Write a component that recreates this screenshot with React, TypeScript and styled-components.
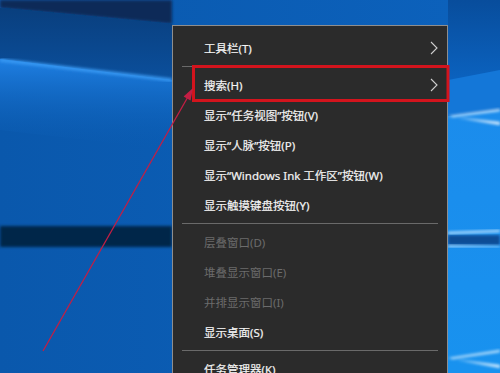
import styled, { createGlobalStyle } from 'styled-components';

const GlobalStyle = createGlobalStyle`
  html, body {
    margin: 0;
    padding: 0;
    background: #0b5cb2;
  }
`;

const Desktop = styled.div`
  position: relative;
  width: 500px;
  height: 373px;
  overflow: hidden;
  box-sizing: border-box;
  padding: 25px 0 0 172px;
  font-family: 'Noto Sans', 'Noto Sans CJK SC', sans-serif;
`;

const Wallpaper = styled.svg`
  position: absolute;
  inset: 0;
  z-index: 0;
`;

const Annotation = styled.svg`
  position: absolute;
  inset: 0;
  z-index: 2;
  pointer-events: none;
`;

const Menu = styled.div`
  position: relative;
  z-index: 1;
  width: 276px;
  box-sizing: border-box;
  border: 1px solid #8e8e8e;
  border-bottom: none;
  background: #2b2b2b;
  padding: 7px 0 40px;
`;

const Item = styled.div<{ $disabled?: boolean }>`
  height: 30px;
  display: flex;
  align-items: center;
  justify-content: space-between;
  padding: 0 9px 0 31px;
  font-size: 11.5px;
  color: ${(p) => (p.$disabled ? '#6c6c6c' : '#f4f4f4')};
  white-space: nowrap;
  -webkit-text-stroke: ${(p) => (p.$disabled ? '0' : '0.2px')};
`;

const Separator = styled.div`
  height: 1px;
  margin: 3px 9px;
  background: #6a6a6a;
`;

const Chevron = () => (
  <svg width="8" height="14" viewBox="0 0 8 14">
    <polyline points="1,1 7,7 1,13" fill="none" stroke="#cfcfcf" strokeWidth="1.1" />
  </svg>
);

type Entry = { label: string; sub?: boolean; disabled?: boolean } | 'sep';

const entries: Entry[] = [
  { label: '工具栏(T)', sub: true },
  'sep',
  { label: '搜索(H)', sub: true },
  { label: '显示“任务视图”按钮(V)' },
  { label: '显示“人脉”按钮(P)' },
  { label: '显示“Windows Ink 工作区”按钮(W)' },
  { label: '显示触摸键盘按钮(Y)' },
  'sep',
  { label: '层叠窗口(D)', disabled: true },
  { label: '堆叠显示窗口(E)', disabled: true },
  { label: '并排显示窗口(I)', disabled: true },
  { label: '显示桌面(S)' },
  'sep',
  { label: '任务管理器(K)' },
];

const Background = () => (
  <Wallpaper width="500" height="373" viewBox="0 0 500 373">
    <defs>
      <linearGradient id="leftBase" x1="0" y1="0" x2="1" y2="0">
        <stop offset="0" stopColor="#0a58ac" />
        <stop offset="1" stopColor="#0c62bd" />
      </linearGradient>
      <linearGradient id="upperBand" x1="0" y1="0" x2="0" y2="1">
        <stop offset="0" stopColor="#093f7e" />
        <stop offset="1" stopColor="#0b4f9c" />
      </linearGradient>
      <linearGradient id="glow" x1="0" y1="0" x2="0" y2="1">
        <stop offset="0" stopColor="#1f80e4" />
        <stop offset="1" stopColor="#0b5cb2" stopOpacity="0" />
      </linearGradient>
      <linearGradient id="rightTop" x1="0" y1="0" x2="0" y2="1">
        <stop offset="0" stopColor="#084d9c" />
        <stop offset="1" stopColor="#0b62bf" />
      </linearGradient>
      <linearGradient id="rightBright" x1="0" y1="0" x2="0" y2="1">
        <stop offset="0" stopColor="#1b8cec" />
        <stop offset="1" stopColor="#1892ef" />
      </linearGradient>
      <filter id="soft">
        <feGaussianBlur stdDeviation="1.6" />
      </filter>
    </defs>
    <rect x="0" y="0" width="500" height="373" fill="url(#leftBase)" />
    <polygon points="0,0 172,0 172,24 0,8" fill="#072b58" filter="url(#soft)" />
    <polygon points="0,8 172,24 172,80 0,59" fill="url(#upperBand)" />
    <polygon points="0,59 172,80 172,150 0,130" fill="url(#glow)" />
    <line x1="0" y1="60" x2="172" y2="80" stroke="#3b9cf6" strokeWidth="3" filter="url(#soft)" />
    <rect x="0" y="226" width="172" height="21" fill="#052649" filter="url(#soft)" />

    <polygon points="448,0 500,0 500,70 448,80" fill="url(#rightTop)" />
    <polygon points="448,80 500,70 500,112 448,116" fill="#1477d8" />
    <polygon points="448,116 500,110 500,373 448,373" fill="url(#rightBright)" />
    <rect x="448" y="235" width="52" height="10" fill="#0b4e96" filter="url(#soft)" />
    <polygon points="448,116 500,109 500,111 452,117 500,122 500,125" fill="#eaf6ff" filter="url(#soft)" />
    <polygon points="448,232 500,230 500,232 448,234" fill="#d8efff" filter="url(#soft)" />
    <polygon points="448,245 500,246 500,247 448,247" fill="#bfe4ff" filter="url(#soft)" />
    <polygon points="448,358 500,350 500,352 452,359 500,365 500,368" fill="#e4f4ff" filter="url(#soft)" />
  </Wallpaper>
);

const Marks = () => (
  <Annotation width="500" height="373" viewBox="0 0 500 373">
    <rect x="193.5" y="66.5" width="254.5" height="34" fill="none" stroke="#d3141d" strokeWidth="3" />
    <line x1="43" y1="351" x2="189" y2="95" stroke="#c41e44" strokeWidth="1.3" />
    <polygon points="193,88 190.5,100.4 183.6,96.4" fill="#c41e44" />
  </Annotation>
);

export default function App() {
  return (
    <>
      <GlobalStyle />
      <Desktop>
        <Background />
        <Menu>
          {entries.map((e, i) =>
            e === 'sep' ? (
              <Separator key={i} />
            ) : (
              <Item key={i} $disabled={e.disabled}>
                <span>{e.label}</span>
                {e.sub && <Chevron />}
              </Item>
            )
          )}
        </Menu>
        <Marks />
      </Desktop>
    </>
  );
}
